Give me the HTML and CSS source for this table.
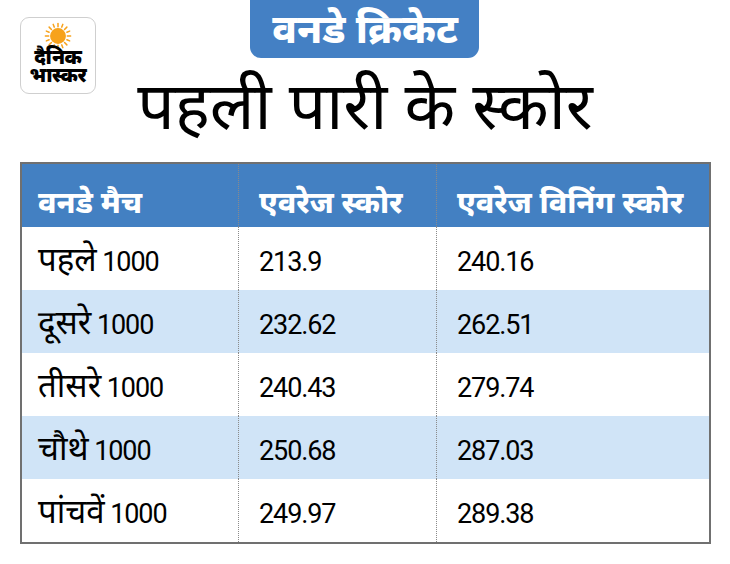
FILE: index.html
```html
<!DOCTYPE html>
<html lang="hi">
<head>
<meta charset="utf-8">
<link rel="stylesheet" href="styles.css">
</head>
<body>
<div class="page">
  <header class="top">
    <div class="logo">
      <svg class="sun" viewBox="0 0 30 30" width="28" height="28">
        <circle cx="15" cy="15" r="8.5" fill="#f7a21b"/>
        <g stroke="#f7a21b" stroke-width="1.6" stroke-linecap="round">
          <line x1="15" y1="1.5" x2="15" y2="5"/>
          <line x1="15" y1="25" x2="15" y2="28.5"/>
          <line x1="1.5" y1="15" x2="5" y2="15"/>
          <line x1="25" y1="15" x2="28.5" y2="15"/>
          <line x1="5.5" y1="5.5" x2="8" y2="8"/>
          <line x1="22" y1="22" x2="24.5" y2="24.5"/>
          <line x1="24.5" y1="5.5" x2="22" y2="8"/>
          <line x1="8" y1="22" x2="5.5" y2="24.5"/>
          <line x1="9.8" y1="2.5" x2="11" y2="5.5"/>
          <line x1="20.2" y1="2.5" x2="19" y2="5.5"/>
          <line x1="9.8" y1="27.5" x2="11" y2="24.5"/>
          <line x1="20.2" y1="27.5" x2="19" y2="24.5"/>
          <line x1="2.5" y1="9.8" x2="5.5" y2="11"/>
          <line x1="2.5" y1="20.2" x2="5.5" y2="19"/>
          <line x1="27.5" y1="9.8" x2="24.5" y2="11"/>
          <line x1="27.5" y1="20.2" x2="24.5" y2="19"/>
        </g>
      </svg>
      <div class="logo-text"><span class="logo-line">दैनिक</span><span class="logo-line">भास्कर</span></div>
    </div>
    <div class="heading">
      <div class="badge">वनडे क्रिकेट</div>
      <h1 class="title">पहली पारी के स्कोर</h1>
    </div>
  </header>
  <table class="scores">
    <thead>
      <tr><th>वनडे मैच</th><th>एवरेज स्कोर</th><th>एवरेज विनिंग स्कोर</th></tr>
    </thead>
    <tbody>
      <tr><td><span class="dv">पहले</span> 1000</td><td>213.9</td><td>240.16</td></tr>
      <tr class="alt"><td><span class="dv">दूसरे</span> 1000</td><td>232.62</td><td>262.51</td></tr>
      <tr><td><span class="dv">तीसरे</span> 1000</td><td>240.43</td><td>279.74</td></tr>
      <tr class="alt"><td><span class="dv">चौथे</span> 1000</td><td>250.68</td><td>287.03</td></tr>
      <tr><td><span class="dv">पांचवें</span> 1000</td><td>249.97</td><td>289.38</td></tr>
    </tbody>
  </table>
</div>
</body>
</html>
```

FILE: styles.css
```css
html, body {
  margin: 0;
  padding: 0;
  background: #ffffff;
}
body {
  font-family: Roboto, "Noto Sans Devanagari", "Noto Sans", sans-serif;
  color: #000;
}
.page {
  width: 730px;
  height: 564px;
  position: relative;
  overflow: hidden;
}
.top {
  height: 162px;
  display: flex;
  justify-content: center;
}
.logo {
  position: absolute;
  left: 20px;
  top: 17px;
  width: 74px;
  height: 75px;
  border: 1px solid #cfcfcf;
  border-radius: 9px;
  display: flex;
  flex-direction: column;
  align-items: center;
}
.sun {
  margin-top: 4px;
}
.logo-text {
  display: flex;
  flex-direction: column;
  align-items: center;
  font-family: "Noto Sans Devanagari", "Noto Sans", sans-serif;
  font-weight: 900;
  font-size: 20px;
  letter-spacing: -0.4px;
}
.logo-line {
  display: block;
  line-height: 18px;
  height: 18px;
}
.heading {
  display: flex;
  flex-direction: column;
  align-items: center;
}
.badge {
  background: #4480c4;
  color: #fff;
  font-family: "Noto Sans Devanagari", "Noto Sans", sans-serif;
  font-weight: 800;
  font-size: 40px;
  line-height: 50px;
  height: 50px;
  padding-top: 8px;
  border-radius: 0 0 11px 11px;
  width: 229px;
  text-align: center;
  white-space: nowrap;
}
.title {
  margin: 11px 0 0 0;
  font-family: "Noto Sans Devanagari", "Noto Sans", sans-serif;
  font-weight: 400;
  font-size: 66px;
  line-height: 88px;
  white-space: nowrap;
}
.scores {
  margin-left: 20px;
  width: 691px;
  border-collapse: collapse;
  border: 2px solid #707070;
  table-layout: fixed;
}
.scores th, .scores td {
  text-align: left;
  white-space: nowrap;
  vertical-align: top;
  padding: 0 0 0 16px;
}
.scores th:nth-child(1), .scores td:nth-child(1) { width: 200px; }
.scores th:nth-child(2), .scores td:nth-child(2) { width: 177px; padding-left: 20px; }
.scores th:nth-child(3), .scores td:nth-child(3) { padding-left: 20px; }
.scores td + td, .scores th + th {
  border-left: 1px dotted #8a8a8a;
}
.scores th {
  background: #4380c2;
  color: #fff;
  font-family: "Noto Sans Devanagari", "Noto Sans", sans-serif;
  font-weight: 800;
  font-size: 30px;
  line-height: 40px;
  height: 41px;
  padding-top: 22px;
}
.scores td {
  font-size: 27px;
  line-height: 44px;
  height: 50px;
  padding-top: 13px;
  letter-spacing: -1.1px;
}
.scores .dv {
  font-family: "Noto Sans Devanagari", "Noto Sans", sans-serif;
  font-size: 33px;
  letter-spacing: 0;
}
.scores tr.alt td {
  background: #d0e4f7;
}
```
